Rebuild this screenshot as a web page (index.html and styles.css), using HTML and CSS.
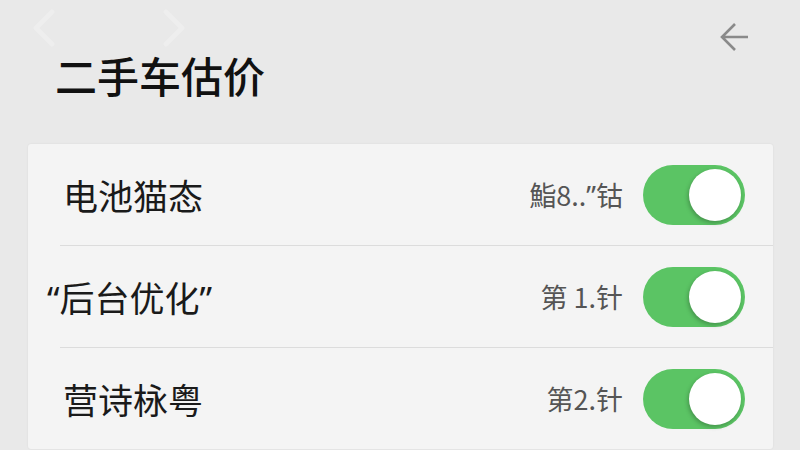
FILE: index.html
```html
<!DOCTYPE html>
<html lang="zh-CN">
<head>
    <meta charset="UTF-8">
    <meta name="viewport" content="width=device-width, initial-scale=1.0">
    <title>二手车估价</title>
    <link rel="stylesheet" href="styles.css">
</head>
<body>

    <!-- Top bar: faint page arrows + back -->
    <div class="topbar">
        <div class="pager">
            <svg class="chev" width="28" height="40" viewBox="0 0 28 40"><path d="M22 4 L6 20 L22 36"/></svg>
            <svg class="chev" width="28" height="40" viewBox="0 0 28 40"><path d="M6 4 L22 20 L6 36"/></svg>
        </div>
        <svg class="back" width="30" height="30" viewBox="0 0 30 30"><path d="M28 14 H2 M15 1 L2 14 L15 27"/></svg>
    </div>

    <h1 class="title">二手车估价</h1>

    <!-- Settings list -->
    <div class="card">
        <div class="row">
            <span class="label">电池猫态</span>
            <span class="value">鮨8..<span class="q">”</span>钴</span>
            <div class="toggle on"><div class="knob"></div></div>
        </div>
        <div class="row">
            <span class="label hang"><span class="q">“</span>后台优化<span class="q">”</span></span>
            <span class="value">第 1.针</span>
            <div class="toggle on"><div class="knob"></div></div>
        </div>
        <div class="row">
            <span class="label">营诗栐粤</span>
            <span class="value">第2.针</span>
            <div class="toggle on"><div class="knob"></div></div>
        </div>
    </div>

</body>
</html>
```

FILE: styles.css
```css
body {
    margin: 0;
    height: 450px;
    overflow: hidden;
    background-color: #e9e9e9;
    font-family: "Noto Sans CJK SC", "Noto Sans", sans-serif;
}

.topbar {
    display: flex;
    justify-content: space-between;
    align-items: flex-start;
    height: 54px;
    padding: 0 50px 0 30px;
}
.pager {
    display: flex;
    gap: 102px;
    padding-top: 8px;
}
.chev path {
    fill: none;
    stroke: #efefef;
    stroke-width: 5;
    stroke-linecap: round;
    stroke-linejoin: round;
    opacity: 0.7;
}
.back {
    margin-top: 23px;
}
.back path {
    fill: none;
    stroke: #8a8a8a;
    stroke-width: 2.6;
    stroke-linejoin: miter;
}

/* Page title */
.title {
    margin: 0 0 0 55px;
    height: 90px;
    font-size: 42px;
    line-height: 42px;
    font-weight: 500;
    color: #111;
}

/* List card */
.card {
    margin: 0 27px 0 28px;
    background-color: #f4f4f4;
    border-radius: 3px;
    box-shadow: 0 0 2px rgba(0, 0, 0, 0.08);
}
.row {
    display: flex;
    align-items: center;
    height: 101px;
    margin-left: 32px;
    padding: 0 28px 0 3px;
}
.row + .row {
    border-top: 1px solid #dcdcdc;
}
.label {
    flex: 1;
    font-size: 35px;
    color: #1a1a1a;
}
.label.hang {
    margin-left: -16px;
}
.q {
    font-family: "Noto Sans", sans-serif;
}
.value {
    margin-right: 20px;
    font-size: 27px;
    color: #555;
}

/* iOS style switch */
.toggle {
    width: 102px;
    height: 60px;
    border-radius: 30px;
    background-color: #5bc464;
    display: flex;
    align-items: center;
    justify-content: flex-end;
    padding-right: 4px;
    box-sizing: border-box;
}
.knob {
    width: 52px;
    height: 52px;
    border-radius: 50%;
    background-color: #fff;
    box-shadow: -1px 2px 4px rgba(0, 0, 0, 0.25);
}
```
